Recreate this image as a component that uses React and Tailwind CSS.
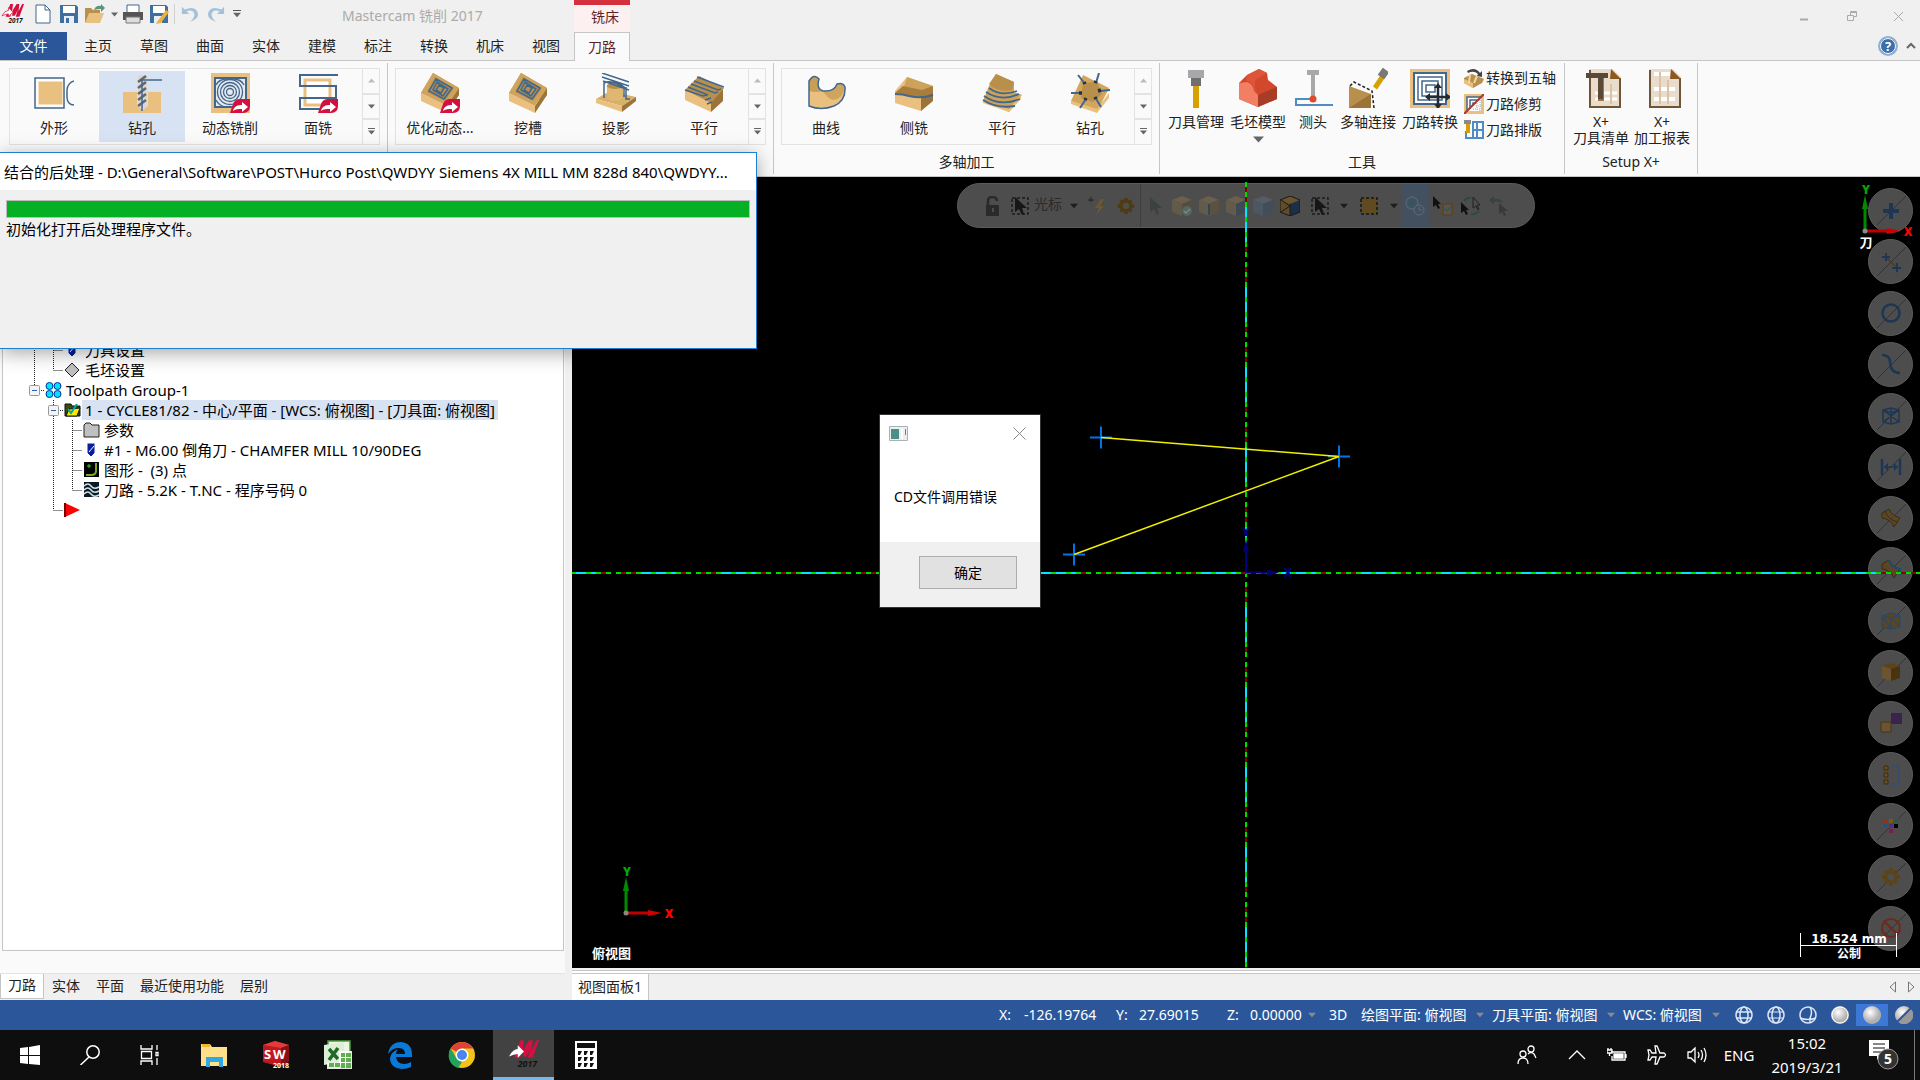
import React, { useState } from 'react';

const NAVY = '#41678d';
const TAN = '#e9c07f';
const WOOD = '#b98f4c';
const DARK = '#9a7438';

const Down = ({ color = '#666', size = 9 }) => (
  <svg width={size} height={size} viewBox="0 0 9 9"><path d="M0 2h9L4.5 7z" fill={color} /></svg>
);

const Svg = ({ size = 40, box = 40, children }) => (
  <svg width={size} height={size} viewBox={`0 0 ${box} ${box}`} fill="none" className="shrink-0">{children}</svg>
);

const RedArrow = () => (
  <g>
    <path d="M23 31q2-5 7-5h10v7q0 7-7 7H20z" fill="#d3103f" />
    <path d="M23 38c1-5 5-6 9-6v-3l6 5-6 5v-3c-4 0-6 0-9 2z" fill="#fff" />
  </g>
);

const TiltedPocket = () => (
  <g>
    <path d="M13 0 39 15 34 28 1 20z" fill={WOOD} />
    <path d="M1 20 27 33v7L1 28z" fill={TAN} />
    <path d="M39 15 27 33v7L39 22z" fill={DARK} />
    <path d="M13 0 39 15 27 33 1 20z" fill="#cfa35b" />
    <path d="M15 4 34 15 25 28 7 19z" fill={WOOD} />
    <path d="M16 6 32 15 24 26 9 18z M17 9l11 7-5 7-10-6z M19 12l5 3-3 5-5-3z" stroke={NAVY} strokeWidth="1.5" />
  </g>
);

const icons = {
  contour: (
    <Svg>
      <rect x="4" y="8" width="25" height="24" fill={TAN} stroke="#fff" />
      <path d="M1 5h29v30H1z" stroke={NAVY} strokeWidth="1.5" />
      <path d="M40 8c-4 1-7 5-7 9v7c0 5 3 8 7 8" stroke={NAVY} strokeWidth="1.5" />
    </Svg>
  ),
  drill: (
    <Svg>
      <path d="M1 19h38v21H1z" fill={TAN} />
      <path d="M15 19h11v14l-5 4-6-4z" fill="#d9e0e8" />
      <path d="M16 3v30l4 4 5-4V3l-4-1z" fill="#d8d8d8" />
      <path d="m16 9 8-6m-8 12 8-6m-8 12 8-6m-8 12 8-6m-8 12 8-6" stroke="#666" strokeWidth="2.5" />
      <path d="M20 38V7h20" stroke={NAVY} strokeWidth="1.5" />
    </Svg>
  ),
  dynamic: (
    <Svg>
      <path d="M1 0h39v40H1z" fill={TAN} />
      <path d="M5 5h31v29H5z" fill="#e6eaee" stroke={NAVY} strokeWidth="2" />
      <circle cx="20" cy="19" r="12.5" stroke={NAVY} strokeWidth="1.3" />
      <circle cx="20" cy="19" r="9.5" stroke={NAVY} strokeWidth="1.3" />
      <circle cx="20" cy="19" r="6.5" stroke={NAVY} strokeWidth="1.3" />
      <circle cx="20" cy="19" r="3.5" stroke={NAVY} strokeWidth="1.3" />
      <path d="M6 12Q9 6 17 6M34 12Q31 6 23 6M6 27q3 6 10 7" stroke={NAVY} strokeWidth="1.3" />
      <RedArrow />
    </Svg>
  ),
  facing: (
    <Svg>
      <path d="M7 7h25v25H7z" fill="#fff" stroke={TAN} strokeWidth="3" />
      <path d="M40 2H2v11h36v12H2v11h22" stroke={NAVY} strokeWidth="2" />
      <RedArrow />
    </Svg>
  ),
  optirough: <Svg><TiltedPocket /><RedArrow /></Svg>,
  pocket: <Svg><TiltedPocket /></Svg>,
  project: (
    <Svg>
      <path d="m0 26 14-8 26 6-14 9z" fill="#d9b06a" />
      <path d="M0 26v4l26 9v-6z" fill={TAN} />
      <path d="m26 33 14-9v4L26 39z" fill={DARK} />
      <path d="M11 12q8-6 16 0v14q-8 5-16 0z" fill={WOOD} />
      <path d="M11 14q8 4 16 0v12q-8 5-16 0z" fill="#e0b771" />
      <path d="m6 0 27 9M6 4l27 9M8 25V10q8-4 20 5v9M7 8l26 9M30 14v12h4M10 9q14-1 21 8" stroke={NAVY} strokeWidth="1.5" />
    </Svg>
  ),
  parallel: (
    <Svg>
      <path d="M1 17 15 3 40 15 27 31z" fill={WOOD} />
      <path d="M1 17l26 13v9L1 27z" fill={TAN} />
      <path d="m27 30 12-14v12L27 39z" fill={DARK} />
      <path d="m13 4 27 10M10 8l24 9 3-1M7 11l24 9 3-1M4 14l20 8M1 17l18 6 4-1m-2 5 6-2m-4 6 5-2" stroke={NAVY} strokeWidth="1.5" />
    </Svg>
  ),
  curve: (
    <Svg>
      <path d="M3 8q5-8 10-2-3 10 4 12 11 1 14-7 6-2 8 3 1 14-11 19-13 5-25 0z" fill={TAN} />
      <path d="M3 8q5-8 10-2-3 10 4 12-8 2-14 0z" fill="#c99f57" />
      <path d="M17 18q11 1 14-7 6-2 8 3-2 12-12 13-6-2-10-9z" fill="#cfa55e" />
      <path d="M3 33V8q5-8 10-2-3 10 4 12 11 1 14-7 6-2 8 3 1 14-11 19-13 5-25 0z" stroke={NAVY} strokeWidth="1.5" />
    </Svg>
  ),
  swarf: (
    <Svg>
      <path d="m1 18 12-14 26 9v11L27 38 1 30z" fill={TAN} />
      <path d="m13 4 26 9-11 8L9 17z" fill="#cda25a" />
      <path d="m9 13 19 4 11-4v9l-12 3L1 20z" fill="#a97d3b" />
      <path d="m27 25 12-5v8L27 38z" fill={DARK} />
      <path d="M1 21q8 0 14 2 12 3 24-1" stroke={NAVY} strokeWidth="2" />
    </Svg>
  ),
  multiParallel: (
    <Svg>
      <path d="M7 13 14 1l18 8v10L40 22 27 39 1 28z" fill="#cda25a" />
      <path d="m7 11 7-10 18 8-2 8q-14 3-23-6z" fill={WOOD} />
      <path d="m1 28 26 8 12-14v4L27 39 1 30z" fill={TAN} />
      <path d="M7 15q12 9 28 3M4 19q15 10 33 2M2 23q16 11 36 3M1 27q14 9 32 6" stroke={NAVY} strokeWidth="1.8" />
    </Svg>
  ),
  multiDrill: (
    <Svg>
      <path d="M13 2 39 15 27 39 1 28z" fill="#d2a65e" />
      <path d="m1 28 26 8 12-16v5L27 40 1 31z" fill={TAN} />
      <path d="m13 10 14-1 5 12-9 8-12-4z" fill={WOOD} />
      <path d="m8 2 7 9M29 0l-3 10M40 17l-10 1M1 20h10M10 35l6-9M31 34l-6-10" stroke={NAVY} strokeWidth="2" />
      <path d="m14 9 1 2m11-3-1 2m6 7-3 1M9 20h3m3 7 1-2m10 1-1-2" stroke="#26313c" strokeWidth="3.5" />
    </Svg>
  ),
  toolManager: (
    <Svg>
      <path d="M12 2h16v8H12z" fill="#a8a8aa" /><path d="M15 10h10v8H15z" fill="#6f6f71" />
      <path d="M17 18h6v22h-6z" fill="#d6a000" />
    </Svg>
  ),
  stock: (
    <Svg>
      <path d="m1 15 8-8L21 1l8 4 1 7 9 7v12L20 39 1 31z" fill="#d2482c" />
      <path d="m1 15 8-1q6 2 7 9l4 4v12L1 31z" fill="#f27f64" />
      <path d="m9 7 12-6 8 4-12 7q-1 10 3 15-4-4-5-9-2-5-7-5z" fill="#dd5638" />
      <path d="m20 27 19-8v12l-19 8z" fill="#a93c26" />
    </Svg>
  ),
  probe: (
    <Svg>
      <path d="M14 2h12v5H14z" fill="#a8a8aa" /><path d="M18 7h4v22h-4z" fill="#a8a8aa" />
      <path d="M40 37H3v-6h15" stroke="#4f8cc4" strokeWidth="2" />
      <circle cx="20" cy="31" r="3.5" fill="#e04a2a" />
    </Svg>
  ),
  link: (
    <Svg>
      <path d="m1 18 22 8v14H1z" fill={WOOD} /><path d="m1 40 22-14v14z" fill={DARK} />
      <path d="m2 18 4-4 18 9 2 17" stroke="#222" strokeWidth="1.5" strokeDasharray="3 2" />
      <path d="m27 20 8-12" stroke="#d6a000" strokeWidth="5" /><path d="m33 9 5-7" stroke="#77787a" strokeWidth="8" />
    </Svg>
  ),
  transform: (
    <Svg>
      <path d="M0 1h40v39H0z" fill={TAN} /><path d="M4 5h32v31H4z" fill="#fff" stroke={NAVY} strokeWidth="2" />
      <path d="M8 9h24v23H8zM12 13h16v15H12zM16 17h9v7h-9z" stroke={NAVY} strokeWidth="1.5" />
      <path d="M28 18v22M17 29h23" stroke="#222b33" strokeWidth="2.5" />
      <path d="m28 15 4 5h-8zm0 26 4-5h-8zM15 29l5-4v8zm26 0-5-4v8z" fill="#222b33" />
    </Svg>
  ),
  sheetT: (
    <Svg>
      <path d="M8 1h24l8 8v31H8z" fill="#eadccb" /><path d="M9 2v37h30V10" stroke="#6d5637" strokeWidth="2" />
      <path d="M30 1l10 10H29z" fill="#8b5a22" />
      <path d="M14 25h22M14 31h22" stroke="#fff" strokeWidth="3" /><path d="M30 16v20" stroke="#d9c2a8" strokeWidth="2" />
      <path d="M17 10h6v23h-6z" fill="#a8733a" />
      <path d="M5 5h22v5h-5v21h-5V10H5z" fill="#5a4936" />
    </Svg>
  ),
  sheet: (
    <Svg>
      <path d="M7 1h24l8 8v31H7z" fill="#eadccb" /><path d="M8 2v37h30V10" stroke="#6d5637" strokeWidth="2" />
      <path d="m29 1 10 10H28z" fill="#8b5a22" />
      <path d="M12 6h16M12 21h21M12 31h21" stroke="#fff" strokeWidth="4" />
      <path d="M18 4v32M26 12v24" stroke="#d9c2a8" strokeWidth="2" />
    </Svg>
  ),
  fiveAxis: (
    <Svg size={20} box={20}>
      <path d="m0 10 8-4 12 5-2 4-9 5-9-5z" fill={WOOD} /><path d="m0 11 9 4v5l-9-5z" fill={TAN} />
      <path d="M3 3q8-5 13 2l2-2v6l-5-1 1-2Q10 2 4 5z" fill="#444" /><path d="m6 6-1 9m8-7-3 7" stroke="#f3d7a2" strokeWidth="2" />
    </Svg>
  ),
  trim: (
    <Svg size={20} box={20}>
      <path d="M0 0h20v20H0z" fill={TAN} /><path d="M3 3h14v14H3z" fill="#fff" />
      <path d="M3 17V3h14M6 15V6h9M9 12V9h3" stroke={NAVY} strokeWidth="1.5" />
      <path d="M9 15h8M12 12h5M13 9v8M16 6v11" stroke="#aaa" strokeDasharray="1 1" />
      <path d="M0 20 20 0" stroke="#a83a2a" strokeWidth="2" />
    </Svg>
  ),
  nesting: (
    <Svg size={20} box={20}>
      <path d="M9 2h10v16H9zM9 10h10M2 11v7h7M13 2v16" stroke="#4f8cc4" strokeWidth="2" />
      <path d="M0 0h7v4H0z" fill="#8a8a8a" /><path d="M2 4h4v9H2z" fill="#d6a000" />
    </Svg>
  ),
};

const ribbonTabs = ['主页', '草图', '曲面', '实体', '建模', '标注', '转换', '机床', '视图'];

const galleries = [
  { id: 'mill2d', items: [['外形', 'contour'], ['钻孔', 'drill'], ['动态铣削', 'dynamic'], ['面铣', 'facing']], active: '钻孔' },
  { id: 'mill3d', items: [['优化动态...', 'optirough'], ['挖槽', 'pocket'], ['投影', 'project'], ['平行', 'parallel']] },
  { id: 'multiaxis', title: '多轴加工', items: [['曲线', 'curve'], ['侧铣', 'swarf'], ['平行', 'multiParallel'], ['钻孔', 'multiDrill']] },
];

const MastercamLogo = ({ size, dark }) => (
  <svg width={size} height={size} viewBox="0 0 24 24" className="overflow-visible">
    <path d="M4 15 9 1h3l-1 8 5-8h3l-1 8 4-8h2l-5 14h-4l2-7-3 6h-3l1-7-3 8z" fill="#d3103f" />
    <path d="M0 14q3-6 7-6V5l5 5-5 5v-3q-3 0-7 2z" fill="#fff" stroke={dark ? 'none' : '#d3103f'} strokeWidth="0.8" />
    <text x="7" y="22" fontSize="7" fontWeight="700" fontStyle="italic" fontFamily="Open Sans, sans-serif" fill="#111">2017</text>
  </svg>
);

const TitleBar = () => (
  <header className="flex h-8 items-center bg-[#f0f0f0]">
    <div className="flex w-[342px] items-center pb-1 pl-0.5">
      <MastercamLogo size={22} />
      <button aria-label="新建" className="ml-1.5 flex w-[26px] justify-center">
        <Svg size={20} box={20}><path d="M3 1h9l5 5v13H3z" fill="#fff" stroke={NAVY} /><path d="M12 1v5h5" stroke={NAVY} /></Svg>
      </button>
      <button aria-label="保存" className="flex w-[26px] justify-center">
        <Svg size={20} box={20}><path d="M1 1h16l2 2v16H1z" fill="#3d6f9f" /><path d="M4 2h12v7H4z" fill="#fff" /><path d="M5 12h10v7H5z" fill="#e9eef3" /><path d="M7 14h3v5H7z" fill="#3d6f9f" /></Svg>
      </button>
      <button aria-label="打开" className="flex w-[26px] justify-center">
        <Svg size={20} box={20}><path d="M0 4h6l2 2h7v12H0z" fill="#b98f4c" /><path d="M4 9h15l-4 10H0z" fill={TAN} /><path d="M9 6q2-5 7-4V0l4 4-4 4V5q-4 0-7 1z" fill="#5a957c" /></Svg>
      </button>
      <button aria-label="打开选项" className="flex w-3 justify-center"><Down size={7} /></button>
      <button aria-label="打印" className="flex w-[26px] justify-center">
        <Svg size={20} box={20}><path d="M4 1h12v8H4z" fill="#fff" stroke={NAVY} /><path d="M0 8h20v8H0z" fill="#555" /><path d="M3 13h14v6H3z" fill="#ddd" stroke="#777" /></Svg>
      </button>
      <button aria-label="另存为" className="flex w-[26px] justify-center">
        <Svg size={20} box={20}><path d="M1 1h16l2 2v16H1z" fill="#3d6f9f" /><path d="M4 2h12v7H4z" fill="#fff" /><path d="M5 12h8v7H5z" fill="#e9eef3" /><path d="m8 18 9-12 3 2-8 11-5 1z" fill="#eab040" /></Svg>
      </button>
      <span className="mx-0.5 h-5 w-px bg-[#d0d0d0]" />
      <button aria-label="撤销" className="flex w-[26px] justify-center">
        <Svg size={18} box={20}><path d="M1 2v8h8L6 7q8-3 9 4-1 5-6 8 10-3 10-9Q17 0 4 5z" fill="#a4c0dc" /></Svg>
      </button>
      <button aria-label="重做" className="flex w-[26px] justify-center">
        <Svg size={18} box={20}><path d="M19 2v8h-8l3-3q-8-3-9 4 1 5 6 8Q1 16 1 10 3 0 16 5z" fill="#a4c0dc" /></Svg>
      </button>
      <button aria-label="自定义" className="ml-0.5 flex w-3 flex-col items-center"><span className="h-px w-2 bg-[#555]" /><Down size={8} /></button>
    </div>
    <h1 className="w-[232px] text-sm text-[#ababab]">Mastercam 铣削 2017</h1>
    <div className="flex h-8 w-14 items-center justify-center border-t-5 border-[#d4303e] bg-[#fdf0f1] pb-1 pl-1.5 text-sm text-[#5d1f26]">铣床</div>
    <div className="ml-auto flex h-8 items-center">
      <button aria-label="最小化" className="flex w-12 justify-center"><svg width="10" height="12"><path d="M1 9.5h8" stroke="#aaa" strokeWidth="2" /></svg></button>
      <button aria-label="还原" className="flex w-12 justify-center"><svg width="11" height="12" fill="none" stroke="#aaa"><path d="M.5 5.5h6v5h-6zM3.5 5V1.5h6v5H7M3 2.500h7" /></svg></button>
      <button aria-label="关闭" className="flex w-11 justify-center"><svg width="11" height="11" stroke="#aaa"><path d="m1 1 9 9M10 1l-9 9" /></svg></button>
    </div>
  </header>
);

const TabBar = () => (
  <nav className="flex h-7 items-stretch bg-[#f0f0f0] text-sm text-[#222]">
    <button className="w-[67px] bg-[#2b579a] text-white">文件</button>
    <div className="flex pl-[3px]">
      {ribbonTabs.map(t => <button key={t} className="w-14">{t}</button>)}
    </div>
    <button className="relative z-10 -mb-px w-14 border border-b-0 border-[#c6c6c6] bg-[#fafafa] text-[#5d1f26]">刀路</button>
    <div className="ml-auto flex items-center gap-2 pr-1">
      <button aria-label="帮助">
        <svg width="20" height="20"><circle cx="10" cy="10" r="9" fill="#3c6ea8" stroke="#8fb0d4" strokeWidth="2" /><circle cx="10" cy="10" r="7.5" fill="none" stroke="#fff" /><text x="10" y="15" textAnchor="middle" fontSize="13" fontWeight="700" fill="#fff">?</text></svg>
      </button>
      <button aria-label="折叠功能区"><svg width="10" height="8" fill="none" stroke="#666" strokeWidth="2"><path d="m1 6 4-4 4 4" /></svg></button>
    </div>
  </nav>
);

const Gallery = ({ items, active }) => (
  <div className="flex h-[77px] w-[371px] border border-[#e3e3e3]">
    <div className="flex flex-1 py-0.5">
      {items.map(([label, icon]) => (
        <button
          key={label}
          className={`flex w-[88px] flex-col items-center gap-[5px] border-x border-transparent bg-clip-padding pt-0.5 text-sm/5 whitespace-nowrap ${label === active ? 'bg-[#d7e2f3]' : ''}`}
        >
          {icons[icon]}
          {label}
        </button>
      ))}
    </div>
    <div className="flex w-[18px] flex-col divide-y-2 divide-[#e3e3e3] border-l border-[#e3e3e3]">
      <button aria-label="向上" className="flex flex-1 items-center justify-center"><span className="rotate-180"><Down color="#bbb" size={7} /></span></button>
      <button aria-label="向下" className="flex flex-1 items-center justify-center"><Down size={7} /></button>
      <button aria-label="更多" className="flex flex-1 flex-col items-center justify-center"><span className="h-px w-[7px] bg-[#666]" /><Down size={7} /></button>
    </div>
  </div>
);

const Group = ({ title, children }) => (
  <section className="flex flex-col border-r border-[#c6c6c6] px-[7px] pt-[5px]">
    {children}
    {title && <h2 className="mt-[7px] text-center text-sm/5">{title}</h2>}
  </section>
);

const BigTool = ({ icon, lines, width = 'w-14', drop }) => (
  <button className={`flex ${width} flex-col items-center text-sm/4 whitespace-nowrap`}>
    {icons[icon]}
    <span className="mt-1.5">{lines[0]}</span>
    {lines[1] && <span>{lines[1]}</span>}
    {drop && <span className="mt-1"><Down color="#666" size={11} /></span>}
  </button>
);

const Ribbon = () => (
  <div className="flex h-[117px] border-y border-[#c6c6c6] bg-[#fafafa] py-0.5 pl-0.5 text-[#222]">
    {galleries.map(g => (
      <Group key={g.id} title={g.title}><Gallery items={g.items} active={g.active} /></Group>
    ))}
    <Group title="工具">
      <div className="flex h-[77px] gap-1.5 px-px">
        <BigTool icon="toolManager" lines={['刀具管理']} />
        <BigTool icon="stock" lines={['毛坯模型']} drop />
        <BigTool icon="probe" lines={['测头']} width="w-[42px]" />
        <BigTool icon="link" lines={['多轴连接']} />
        <BigTool icon="transform" lines={['刀路转换']} />
        <div className="flex flex-col gap-1.5 text-sm/5 whitespace-nowrap">
          <button className="flex items-center gap-0.5">{icons.fiveAxis}转换到五轴</button>
          <button className="flex items-center gap-0.5">{icons.trim}刀路修剪</button>
          <button className="flex items-center gap-0.5">{icons.nesting}刀路排版</button>
        </div>
      </div>
    </Group>
    <Group title="Setup X+">
      <div className="flex h-[77px] gap-[5px] pl-px">
        <BigTool icon="sheetT" lines={['X+', '刀具清单']} />
        <BigTool icon="sheet" lines={['X+', '加工报表']} />
      </div>
    </Group>
  </div>
);

// operations tree: each row starts with 19px guide cells
const guides = {
  blank: null,
  line: <path d="M9.5 0v20" />,
  tee: <path d="M9.5 0v20M9.5 10.5H19" />,
  end: <path d="M9.5 0v10M9.5 10.5H19" />,
  boxEnd: <path d="M9.5 0v6M14 10.5h5" />,
  box: <path d="M9.5 0v20M14 10.5h5" />,
};

const Guide = ({ kind }) => (
  <svg width="19" height="20" className="shrink-0">
    <g stroke="#222" strokeDasharray="1 1">{guides[kind]}</g>
    {kind.startsWith('box') && (
      <g><rect x="4.5" y="5.5" width="10" height="10" rx="1" fill="#f4f4f4" stroke="#999" /><path d="M7 10.5h5" stroke="#2c5fb3" /></g>
    )}
  </svg>
);

const treeIcons = {
  tool: <path d="M5 3h8v10l-4 4-4-4zM7 12l5-6" fill="#0a1ea0" stroke="#fff" strokeWidth="1" />,
  stock: <path d="m9 3 7 7-7 7-7-7z" fill="#c0c0c0" stroke="#222" />,
  group: (
    <g fill="#00e5ff" stroke="#0030a0">
      <circle cx="5.500" cy="6" r="3.5" /><circle cx="13.5" cy="6" r="3.5" /><circle cx="5.5" cy="14" r="3.5" /><circle cx="13.5" cy="14" r="3.5" />
    </g>
  ),
  folder: <g><path d="M2 4h6l1 2h8v10H2z" fill="#3a4a10" stroke="#111" /><path d="m6 9 11-1-3 8H3z" fill="#ffe800" stroke="#111" /><path d="m5 9 3 4 6-9" stroke="#00a8a0" strokeWidth="2" fill="none" /></g>,
  params: <path d="M2 5l2-2h4l2 2h7v12H2z" fill="#c0c0c0" stroke="#222" />,
  geometry: <g><path d="M2 2h15v15H2z" fill="#000" /><path d="M5 6h4M7 4v4" stroke="#1fd81f" /><path d="M14 3v8q0 4-5 4H4" stroke="#7da81f" strokeWidth="2" fill="none" /></g>,
  nc: <g><path d="M2 2h15v15H2z" fill="#0b1a22" /><path d="M2 6q4-4 7 0t8 1M2 10q4-4 7 0t8 1M2 14q4-4 7 0t8 1" stroke="#cfe4ea" strokeWidth="1.5" fill="none" /></g>,
  insert: <g><path d="m2 3 15 7-15 7z" fill="#f00" /><path d="M2 3v14" stroke="#700" strokeWidth="2" /></g>,
};

const treeRows = [
  { g: ['line', 'tee'], icon: 'tool', text: '刀具设置' },
  { g: ['line', 'end'], icon: 'stock', text: '毛坯设置' },
  { g: ['boxEnd'], icon: 'group', text: 'Toolpath Group-1' },
  { g: ['blank', 'box'], icon: 'folder', text: '1 - CYCLE81/82 - 中心/平面 - [WCS: 俯视图] - [刀具面: 俯视图]', selected: true },
  { g: ['blank', 'line', 'tee'], icon: 'params', text: '参数' },
  { g: ['blank', 'line', 'tee'], icon: 'tool', text: '#1 - M6.00 倒角刀 - CHAMFER MILL 10/90DEG' },
  { g: ['blank', 'line', 'tee'], icon: 'geometry', text: '图形 -  (3) 点' },
  { g: ['blank', 'line', 'end'], icon: 'nc', text: '刀路 - 5.2K - T.NC - 程序号码 0' },
  { g: ['blank', 'end'], icon: 'insert', text: '' },
];

const LeftPanel = () => {
  const [tab, setTab] = useState('刀路');
  return (
    <aside className="flex w-[572px] shrink-0 flex-col border-r-[7px] border-[#f0f0f0] bg-[#fafafa]">
      <ul className="mr-px ml-0.5 flex-1 border border-[#c6c6c6] bg-white pt-[162px] pl-[22px] text-[15px] text-black">
        {treeRows.map((r, i) => (
          <li key={i} className="flex h-5 items-center whitespace-pre">
            {r.g.map((k, j) => <Guide key={j} kind={k} />)}
            <svg width="19" height="20" className="shrink-0">{treeIcons[r.icon]}</svg>
            <span className={`px-[3px] leading-5 ${r.selected ? 'bg-[#d7e2f3]' : ''}`}>{r.text}</span>
          </li>
        ))}
      </ul>
      <div className="mt-[22px] flex h-[27px] border-t border-[#e3e3e3] bg-[#f0f0f0] text-sm text-[#222]">
        {['刀路', '实体', '平面', '最近使用功能', '层别'].map(t => (
          <button key={t} onClick={() => setTab(t)} className={`mb-px border px-[7px] pb-0.5 ${t === tab ? 'border-t-0 border-[#c6c6c6] bg-white' : 'border-transparent'}`}>{t}</button>
        ))}
      </div>
    </aside>
  );
};

const Cube = ({ front = '#625a4a', side = '#544c3d', top = '#6a604d', extra }) => (
  <Svg size={20} box={20}>
    <path d="m0 4 10-4 10 4-10 4z" fill={top} /><path d="M0 4l10 4v12L0 16z" fill={front} /><path d="M20 4 10 8v12l10-4z" fill={side} />
    {extra}
  </Svg>
);

const Cursor = ({ color = '#161616', dashed }) => (
  <Svg size={20} box={20}>
    {dashed && <path d="M2 2h16v16H2z" stroke="#1b1b1b" strokeWidth="1.5" strokeDasharray="3 2" />}
    <path d="M5 1v15l4-3 3 6 2-1-2-6h5z" fill={color} />
  </Svg>
);

// eight-toothed gear centred in a 20px box
const Gear = ({ color, hole = '#4d4d4d' }) => (
  <g>
    <path d="M10 1v18M1 10h18M4 4l12 12M16 4 4 16" stroke={color} strokeWidth="4" />
    <circle cx="10" cy="10" r="7" fill={color} />
    <circle cx="10" cy="10" r="3.5" fill={hole} />
  </g>
);

const solidTools = [
  { id: '选择', icon: <Cursor color="#3a4140" /> },
  { id: '实体选择', icon: <Cube extra={<g><circle cx="15" cy="15" r="5" fill="#56655f" /><path d="m12 15 2 2 4-4" stroke="#79897f" strokeWidth="1.5" /></g>} /> },
  { id: '边界', icon: <Cube side="#5a5141" extra={<path d="M10 8v11" stroke="#2f4560" strokeWidth="2" />} /> },
  { id: '面', icon: <Cube side="#3f4854" /> },
  { id: '主体', icon: <Cube front="#4d5763" side="#434d59" top="#535c68" /> },
  { id: '背面', icon: <Cube front="#5f4c28" side="#1d2f47" top="#6b552d" extra={<path d="m0 4 10-4 10 4v12l-10 4-10-4zM10 8v12M10 10 1 16M10 10 1 4" stroke="#191919" />} /> },
];

const SelectionBar = () => (
  <div role="toolbar" className="absolute top-1.5 left-1/2 flex h-[45px] -translate-x-1/2 items-stretch rounded-full border border-[#5c5c5c] bg-[#4d4d4d] px-[21px] text-[#2b2b2b]">
    <button aria-label="锁定" className="flex w-[27px] items-center justify-center">
      <Svg size={20} box={20}><path d="M3 9h13v11H3z" fill="#2a2a2a" /><path d="M5 9V5q0-4 4-4 5 0 5 4" stroke="#2a2a2a" strokeWidth="2.5" /><path d="M9 12h2v4H9z" fill="#4d4d4d" /></Svg>
    </button>
    <button aria-label="选择方式" className="flex w-7 items-center justify-center"><Cursor dashed /></button>
    <label className="flex w-[50px] items-center">
      <select aria-label="光标" className="w-[30px] appearance-none bg-transparent pb-1 text-sm text-[#2b2b2b] outline-none"><option>光标</option></select>
      <span className="flex w-5 justify-center"><Down color="#1d1d1d" size={8} /></span>
    </label>
    <button aria-label="自动抓点" className="flex w-7 items-center justify-center">
      <Svg size={20} box={20}><path d="M3 1v5M0 4h6" stroke="#222" /><path d="m13 3-6 9h4l-3 7 8-9h-4l4-7z" fill="#6b5a30" /></Svg>
    </button>
    <button aria-label="抓点设置" className="flex w-7 items-center justify-center">
      <Svg size={18} box={20}><Gear color="#4f3a12" /></Svg>
    </button>
    <span className="w-px bg-[#3f3f3f]" />
    {solidTools.map(t => <button key={t.id} aria-label={t.id} className="flex w-[27px] items-center justify-center">{t.icon}</button>)}
    <button aria-label="窗选" className="flex w-[34px] items-center justify-center"><Cursor dashed /></button>
    <button aria-label="窗选选项" className="flex w-3.5 items-center justify-center"><Down color="#1d1d1d" size={8} /></button>
    <button aria-label="范围" className="flex w-9 items-center justify-center">
      <Svg size={20} box={20}><path d="M2 2h16v16H2z" fill="#5f4a22" stroke="#161616" strokeWidth="1.5" strokeDasharray="3 2" /></Svg>
    </button>
    <button aria-label="范围选项" className="flex w-3.5 items-center justify-center"><Down color="#1d1d1d" size={8} /></button>
    <button aria-label="验证选择" className="flex w-7 items-center justify-center bg-[#42505f]">
      <Svg size={20} box={20}><circle cx="7" cy="7" r="6" stroke="#54646c" strokeWidth="1.5" /><circle cx="7" cy="7" r="3" fill="#33585a" /><circle cx="14" cy="14" r="5" fill="#42505f" stroke="#5f6c79" /><path d="M14 11v3h3" stroke="#5f6c79" /></Svg>
    </button>
    <button aria-label="选择列表" className="flex w-7 items-center justify-center">
      <Svg size={20} box={20}><path d="M0 0v11l3-2 2 4 2-1-2-4h3z" fill="#111" /><path d="M10 8h9v11h-9z" fill="#555" stroke="#5e4418" strokeWidth="1.5" /><path d="m12 13 2 2 4-4" stroke="#2c5a42" strokeWidth="1.5" /></Svg>
    </button>
    <button aria-label="反向选择" className="flex w-7 items-center justify-center">
      <Svg size={20} box={20}><path d="M0 6v11l3-2 2 4 2-1-2-4h3z" fill="#111" /><path d="M12 1v11l3-2 2 4 1-1-2-4h3z" stroke="#222" /><path d="M3 5q3-4 7-3M18 15q-4 4-8 3" stroke="#2b4a40" strokeWidth="2" /></Svg>
    </button>
    <button aria-label="上次选择" className="flex w-7 items-center justify-center">
      <Svg size={20} box={20}><path d="M0 4l5-4v3q7-1 9 4-4-2-9-1v3z" fill="#33463f" /><path d="M10 7v11l3-2 2 4 2-1-2-4h4z" fill="#3a3a3a" /></Svg>
    </button>
  </div>
);

const blue = '#1c3654';
const brown = '#5b4522';

const quickMasks = [
  { id: '点', icon: <path d="M10 2v16M2 10h16" stroke={blue} strokeWidth="4" />, slash: true },
  { id: '线', icon: <g><path d="m5 5 10 10" stroke="#4d3a22" strokeWidth="1.5" /><path d="M5 1v8M1 5h8M16 11v9M11 16h9" stroke={blue} strokeWidth="1.8" /></g>, slash: true },
  { id: '圆弧', icon: <circle cx="10" cy="10" r="8.5" stroke={blue} strokeWidth="2.5" />, slash: true },
  { id: '曲线', icon: <path d="M1 1q7 0 8 6 0 12 10 12" stroke={blue} strokeWidth="2.5" />, slash: true },
  { id: '线框', icon: <path d="m2 4 8-2 8 2v12l-8 2-8-2zM2 4l16 12M18 4 2 16M10 2v16M2 4l8 3 8-3" stroke={blue} strokeWidth="1.5" />, slash: true },
  { id: '标注', icon: <g><path d="M1 2v16M19 2v16" stroke={blue} strokeWidth="2.5" /><path d="M3 10h14" stroke={blue} strokeWidth="1.5" /><path d="m3 10 4-4v8zM17 10l-4-4v8z" fill={blue} /></g>, slash: true },
  { id: '曲面', icon: <path d="m1 5 7-4q2 6 11 9l-6 9q-3-8-12-9zM4 3q3 8 12 11" fill={brown} stroke="#3d2c12" />, slash: true },
  { id: '曲面曲线', icon: <g><path d="m1 5 7-4q2 6 11 9l-6 9q-3-8-12-9z" fill={brown} stroke="#3d2c12" /><path d="M8 1q2 8 11 9v6" stroke="#24486b" strokeWidth="2" /></g>, slash: true },
  { id: '网格', icon: <g><path d="m1 5 9-3 9 3v11l-9 2-9-2z" fill={brown} /><path d="m1 5 9-3 9 3v11l-9 2-9-2zM1 5l9 2 9-2M10 7v11M1 5l9 12M10 7l9 9" stroke="#2a4868" strokeWidth="1.3" /></g>, slash: true },
  { id: '实体', icon: <g><path d="m1 4 9-3 9 3-9 3z" fill="#5d4317" /><path d="m1 4 9 3v12l-9-3z" fill="#6d5430" /><path d="m19 4-9 3v12l9-3z" fill="#4a330f" /></g>, slash: true },
  { id: '颜色', icon: <g><path d="M10 0h11v11H10z" fill="#38244c" /><path d="M0 9h10v10H0z" fill="#6b5432" stroke="#4a3512" /></g> },
  { id: '群组', icon: <g><path d="M3 1h4v4H3zM3 8h4v4H3zM3 15h4v4H3z" fill="#6b4e1c" stroke="#3f2c0c" /><path d="M10 1h8v18h-8" stroke="#2f4f73" strokeWidth="1.5" /></g> },
  { id: '调色板', icon: <g><path d="M3 3h4v4H3z" fill="#8a3520" /><path d="M8 3h4v4H8z" fill="#7a5a10" /><path d="M13 3h4v4h-4z" fill="#2c5a4a" /><path d="M3 8h4v4H3z" fill="#2a4f80" /><path d="M8 8h4v4H8z" fill="#5a2a80" /><path d="M13 8h4v4h-4z" fill="#000" /><path d="M8 13h4v4H8z" fill="#801a50" /></g>, slash: true },
  { id: '高级', icon: <Gear color="#5a441a" />, slash: true },
  { id: '清除', icon: <g stroke="#6e2a1e" strokeWidth="2.2"><circle cx="10" cy="10" r="9" /><path d="m4 4 12 12" /></g>, slash: true },
];

const QuickMasks = () => (
  <div className="absolute top-[11px] right-[7px] bottom-[17px] flex flex-col justify-between">
    {quickMasks.map(m => (
      <button key={m.id} aria-label={m.id} className="relative flex size-[45px] items-center justify-center overflow-hidden rounded-full border border-[#5c5c5c] bg-[#4d4d4d]">
        {m.slash && <svg width="44" height="44" className="absolute inset-0"><path d="M8 36 37 7" stroke="#333" /></svg>}
        <svg width="20" height="20" viewBox="0 0 20 20" fill="none" className="relative overflow-visible">{m.icon}</svg>
      </button>
    ))}
  </div>
);

const Cross = ({ x, y }) => <path d={`M${x - 11} ${y}h22M${x} ${y - 11}v22`} stroke="#0073e6" strokeWidth="2" />;

const Gnomon = () => (
  <g fontFamily="Open Sans, sans-serif" fontSize="12" fontWeight="800" textAnchor="middle">
    <path d="M0 0v-24" stroke="#008a00" strokeWidth="3" /><path d="m0-36 3 14h-6z" fill="#008a00" />
    <path d="M0 0h24" stroke="#c00000" strokeWidth="3" /><path d="m36 0-14 3v-6z" fill="#d00000" />
    <circle r="2.5" fill="#888" />
    <text x="1" y="-37" fill="#00a800">Y</text>
    <text x="43" y="5" fill="#f00">X</text>
  </g>
);

const axisLayers = [
  ['#00dc00', '75 5'],
  ['#8a0000', '0 5 5 5 5 45 5 10'],
  ['#00e5ff', '0 25 10 5 10 5 5 20'],
];

const Drawing = () => (
  <svg className="pointer-events-none absolute inset-0 h-full w-full">
    {axisLayers.map(([c, dash]) => (
      <g key={c} stroke={c} strokeWidth="2" strokeDasharray={dash} shapeRendering="crispEdges">
        <line x1="0" x2="100%" y1="50%" y2="50%" strokeDashoffset="36" />
        <line x1="50%" x2="50%" y1="0" y2="100%" strokeDashoffset="75" />
      </g>
    ))}
    <svg x="50%" y="50%" overflow="visible">
      <g stroke="#00007a" strokeWidth="2"><path d="M0 0v-26M0 0h26" /></g>
      <path d="m0-33 3 12h-6zM33 0 21 3v-6z" fill="#00006e" />
      <g fill="#00007a" fontSize="12" fontWeight="800" textAnchor="middle" fontFamily="Open Sans, sans-serif">
        <text x="0" y="-37">Y</text><text x="42" y="4">X</text>
      </g>
      <Cross x={-145} y={-135} />
      <Cross x={93} y={-116} />
      <Cross x={-172} y={-18} />
      <path d="m-145-135 238 19-265 98" fill="none" stroke="#f0f000" strokeWidth="1.5" />
    </svg>
    <svg x="54" y="100%" overflow="visible">
      <g transform="translate(0 -55)"><Gnomon /></g>
      <text x="-34" y="-10" fill="#fff" fontSize="13" fontWeight="700">俯视图</text>
    </svg>
    <svg x="100%" overflow="visible">
      <g transform="translate(-55 54)"><Gnomon /><text x="1" y="16" textAnchor="middle" fill="#fff" fontSize="13" fontWeight="700">刀</text></g>
    </svg>
    <svg x="100%" y="100%" overflow="visible">
      <path d="M-119.5-35v24M-23.5-35v24M-120-22.5h97" stroke="#fff" />
      <g fill="#fff" textAnchor="middle" fontWeight="700">
        <text x="-71" y="-25" fontSize="12" fontFamily="DejaVu Sans, sans-serif">18.524 mm</text>
        <text x="-71" y="-10" fontSize="12">公制</text>
      </g>
    </svg>
  </svg>
);

const Viewport = () => (
  <main className="flex min-w-0 flex-1 flex-col bg-[#f0f0f0]">
    <div className="relative flex-1 overflow-hidden bg-black">
      <SelectionBar />
      <QuickMasks />
      <Drawing />
    </div>
    <div className="mt-0.5 h-1 border-y border-[#c6c6c6] bg-white" />
    <div className="flex h-[26px] items-center justify-between">
      <button className="h-full border-r border-[#c6c6c6] bg-white px-1.5 text-sm text-[#222]">视图面板1</button>
      <div className="flex gap-3 pr-[5px]">
        <button aria-label="向左滚动"><svg width="7" height="12" fill="none" stroke="#777"><path d="M6.5 1v10L1 6z" /></svg></button>
        <button aria-label="向右滚动"><svg width="7" height="12" fill="none" stroke="#777"><path d="M.5 1v10L6 6z" /></svg></button>
      </div>
    </div>
  </main>
);

const Sphere = ({ kind }) => (
  <svg width="18" height="18" viewBox="0 0 18 18" fill="none">
    <defs>
      <radialGradient id="ball" cx="0.4" cy="0.35"><stop offset="0" stopColor="#fff" /><stop offset="1" stopColor="#b0b0b0" /></radialGradient>
    </defs>
    {kind < 3 ? (
      <g stroke="#dbe6f6" strokeWidth="1.5">
        <circle cx="9" cy="9" r="8" />
        {kind < 2 && <path d="M1 6h16M1 12h16" strokeWidth={kind ? 1 : 1.5} />}
        {kind < 2 && <ellipse cx="9" cy="9" rx="4" ry="8" />}
        {kind === 2 && <path d="M11 1q3 5 0 11v5M1 12q8 3 16 0" />}
      </g>
    ) : (
      <g>
        <circle cx="9" cy="9" r="9" fill="url(#ball)" />
        {kind === 3 && <circle cx="9" cy="9" r="8" stroke="#fff" />}
        {kind === 5 && <g><path d="M15.5 2.5A9 9 0 0 1 2.5 15.5z" fill="#999" /><path d="m2 16 14-14" stroke="#2b579a" strokeWidth="2" /></g>}
      </g>
    )}
  </svg>
);

const StatusBar = () => (
  <footer className="flex h-[30px] items-center justify-end bg-[#2b579a] text-sm whitespace-nowrap text-white">
    <span className="w-[25px]">X:</span><span className="w-[92px]">-126.19764</span>
    <span className="w-[23px]">Y:</span><span className="w-[88px]">27.69015</span>
    <span className="w-[23px]">Z:</span>
    <button className="flex w-[79px] items-center gap-1.5">0.00000<Down color="#8a8a8a" size={8} /></button>
    <button className="w-8 text-left">3D</button>
    {['绘图平面: 俯视图', '刀具平面: 俯视图'].map(t => (
      <button key={t} className="flex w-[131px] items-center justify-between pr-2">{t}<Down color="#8a8a8a" size={8} /></button>
    ))}
    <button className="flex w-[105px] items-center justify-between pr-2">WCS: 俯视图<Down color="#8a8a8a" size={8} /></button>
    {['线框', '隐藏线', '消隐', '轮廓着色', '着色', '半透明'].map((t, i) => (
      <button key={t} aria-label={t} className={`flex h-[22px] w-8 items-center justify-center ${i === 4 ? 'bg-[#3e78d6]' : ''}`}><Sphere kind={i} /></button>
    ))}
  </footer>
);

const apps = [
  { id: '文件资源管理器', icon: <g><path d="M1 3h9l2 3h15v19H1z" fill="#ffe08a" /><path d="M2 3h8v3H2z" fill="#f2b92e" /><path d="M6 26V16h17v10h-4v-5h-9v5z" fill="#2fa8e4" /></g> },
  { id: 'SolidWorks', icon: <g><path d="m1 4 12-4 14 4v16l-8 6-18-5z" fill="#c01820" /><path d="m1 4 12-4 14 4-8 3z" fill="#e33a3a" /><path d="m19 7 8-3v16l-8 6z" fill="#8a0f14" /><text x="2" y="18" fontSize="13" fontWeight="700" fill="#fff">S</text><text x="11" y="18" fontSize="13" fontWeight="700" fill="#fff">W</text><text x="11" y="27" fontSize="7" fontWeight="700" fill="#fff">2018</text></g> },
  { id: 'Excel', icon: <g><path d="M4 0h22v24H4z" fill="#eaf5e4" stroke="#4c9a3f" strokeWidth="1.5" /><path d="M0 4 20 1v19L0 24z" fill="#dcefd4" /><path d="m5 8 9 10M14 7 5 19" stroke="#1f6b2a" strokeWidth="3.5" /><path d="M15 10h13v18H3v-6h12z" fill="#fff" opacity=".9" /><path d="M17 12h4v4h-4zM22 12h5v4h-5zM17 17h4v4h-4zM22 17h5v4h-5zM5 22h5v4H5zM11 22h5v4h-5zM17 22h4v5h-4zM22 22h5v5h-5z" fill="#5fae50" /></g> },
  { id: 'Edge', icon: <path d="M2 13Q4 1 15 1q11 1 11 13v2H10q1 7 8 7 4 0 7-2v5q-4 2-9 2-12-1-12-11 1-6 8-9-2 2-2 5h9q0-6-6-6Q7 6 2 13z" fill="#0a78d6" /> },
  { id: 'Chrome', icon: <g><circle cx="14" cy="14" r="13" fill="#f2c318" /><path d="M14 14 2.7 7.500A13 13 0 0 1 25.3 7.5H14z" fill="#de4335" /><path d="M2.7 7.5 9 18l5 3-4 6A13 13 0 0 1 2.700 7.5z" fill="#22a35a" /><circle cx="14" cy="14" r="6.5" fill="#fff" /><circle cx="14" cy="14" r="5" fill="#4a84ee" /></g> },
  { id: 'Mastercam', active: true },
  { id: '计算器', icon: <g><path d="M3 0h22v28H3z" fill="#fff" /><path d="M5 2h18v5H5z" fill="#111" /><path d="M6 10h4l-2 4H6zM12 10h4l-2 4h-2zM18 10h4l-2 4h-2zM6 16h4l-2 4H6zM12 16h4l-2 4h-2zM18 16h4l-2 4h-2zM6 22h4l-2 4H6zM12 22h4l-2 4h-2zM18 22h4l-2 4h-2z" fill="#111" /></g> },
];

const TrayIcon = ({ label, children }) => (
  <button aria-label={label} className="flex w-10 justify-center">
    <svg width="20" height="20" viewBox="0 0 20 20" fill="none" stroke="#fff" strokeWidth="1.3">{children}</svg>
  </button>
);

const Taskbar = () => (
  <nav className="flex h-[50px] items-stretch bg-[#0f0e0e] text-white">
    <button aria-label="开始" className="flex w-[60px] items-center justify-center">
      <svg width="20" height="20" fill="#fff"><path d="m0 3 8-1v8H0zM9 2l11-2v10H9zM0 11h8v8l-8-1zM9 11h11v9L9 19z" /></svg>
    </button>
    <button aria-label="搜索" className="flex w-[60px] items-center justify-center">
      <svg width="20" height="20" fill="none" stroke="#fff" strokeWidth="1.5"><circle cx="13" cy="7" r="6.2" /><path d="M9 12l-8.5 8" /></svg>
    </button>
    <button aria-label="任务视图" className="mr-[3px] flex w-[60px] items-center justify-center">
      <svg width="20" height="20" fill="none" stroke="#fff" strokeWidth="1.3"><path d="M1 0v4h11V0M1 20v-4h11v4M1.5 6.5h10v7h-10zM17 0v5m0 8v7M16 7.5h2v3h-2z" /></svg>
    </button>
    <div className="flex gap-px">
      {apps.map(a => (
        <button key={a.id} aria-label={a.id} className={`flex w-[61px] items-center justify-center ${a.active ? 'border-b-3 border-[#76b9ed] bg-[#434242]' : ''}`}>
          {a.active ? <MastercamLogo size={30} dark /> : <svg width="28" height="28" viewBox="0 0 28 28" className="overflow-visible">{a.icon}</svg>}
        </button>
      ))}
    </div>
    <div className="ml-auto flex items-center">
      <span className="mr-2.5 flex">
        <TrayIcon label="人脉"><circle cx="6" cy="9" r="3" /><circle cx="14" cy="4" r="3" /><path d="M1 19q0-6 5-6t5 6M11 9q3-3 6 0l2 4" /></TrayIcon>
      </span>
      <TrayIcon label="显示隐藏的图标"><path d="m2 14 8-8 8 8" /></TrayIcon>
      <TrayIcon label="电池"><path d="M4 7h14v8H5v-4M19 9v4" /><path d="M7 9h9v4H7z" fill="#fff" /><path d="M1 3v2M4 3v2M0 5h5v3H0zM2.5 8v3" /></TrayIcon>
      <TrayIcon label="飞行模式"><path d="M8 1h2l3 7h4q3 2 0 4h-4l-3 7H8l1-7H5l-2 3H1l1-5-1-5h2l2 3h4z" /></TrayIcon>
      <TrayIcon label="音量"><path d="M1 7h3l4-4v14l-4-4H1zM11 7q2 3 0 6M14 5q3 5 0 10M17 3q4 7 0 14" /></TrayIcon>
      <button className="w-[44px] text-center text-[15px]">ENG</button>
      <button className="w-[92px] text-center text-[15px]/6 whitespace-nowrap">15:02<br />2019/3/21</button>
      <button aria-label="通知" className="flex w-[62px] justify-center border-r border-[#777] py-[9px]">
        <svg width="32" height="32"><path d="M1 1h20v16h-8l-4 4v-4H1z" fill="#fff" /><path d="M5 5h12M5 9h12M5 13h12" stroke="#111" /><circle cx="20" cy="20" r="10" fill="#333" stroke="#999" /><text x="20" y="25" textAnchor="middle" fontSize="14" fontWeight="700" fill="#fff">5</text></svg>
      </button>
      <span className="w-[5px]" />
    </div>
  </nav>
);

const PostDialog = () => (
  <section role="dialog" aria-label="结合的后处理" className="absolute top-[152px] left-0 z-20 flex h-[197px] w-[757px] flex-col border border-l-0 border-[#1e7fd0] bg-[#f0f0f0] text-[15px] text-black shadow-[0_4px_18px_rgba(0,0,0,0.35)]">
    <h2 className="h-[37px] overflow-hidden bg-white pl-1 leading-[38px] whitespace-nowrap">
      结合的后处理 - D:\General\Software\POST\Hurco Post\QWDYY Siemens 4X MILL MM 828d 840\QWDYY...
    </h2>
    <div role="progressbar" aria-valuenow={100} aria-label="进度" className="mx-1.5 mt-2.5 h-[18px] border border-[#bcbcbc] bg-[#06b025]" />
    <p className="px-1.5 leading-[22px]">初始化打开后处理程序文件。</p>
  </section>
);

const ErrorDialog = () => (
  <section role="alertdialog" aria-label="CD文件调用错误" className="absolute top-[414px] left-1/2 z-30 w-[162px] -translate-x-1/2 border border-[#333] bg-white text-sm text-black">
    <div className="flex h-9 items-center justify-between pr-3.5 pl-[9px]">
      <svg width="19" height="15"><path d="M.5.5h18v14H.5z" fill="#eee" stroke="#a9b0b8" /><path d="M2 3h8v10H2z" fill="#4a9087" /><path d="M12 3h2v10h-2z" fill="#fff" /><path d="M16 3h1v6h-1z" fill="#4a9087" /></svg>
      <button aria-label="关闭"><svg width="13" height="13" stroke="#888"><path d="m.5.5 12 12M12.5.5l-12 12" /></svg></button>
    </div>
    <p className="px-3.5 pt-9 pb-[35px] leading-5">CD文件调用错误</p>
    <div className="flex justify-end bg-[#f0f0f0] pt-3.5 pr-[23px] pb-[18px]">
      <button className="h-[33px] w-[98px] border border-[#adadad] bg-[#e1e1e1]">确定</button>
    </div>
  </section>
);

const App = () => (
  <div lang="zh-CN" className="relative flex h-screen flex-col overflow-hidden bg-[#f0f0f0] font-['Noto_Sans','Noto_Sans_CJK_SC',sans-serif]">
    <TitleBar />
    <TabBar />
    <Ribbon />
    <div className="flex min-h-0 flex-1">
      <LeftPanel />
      <Viewport />
    </div>
    <StatusBar />
    <Taskbar />
    <PostDialog />
    <ErrorDialog />
  </div>
);

export default App;
